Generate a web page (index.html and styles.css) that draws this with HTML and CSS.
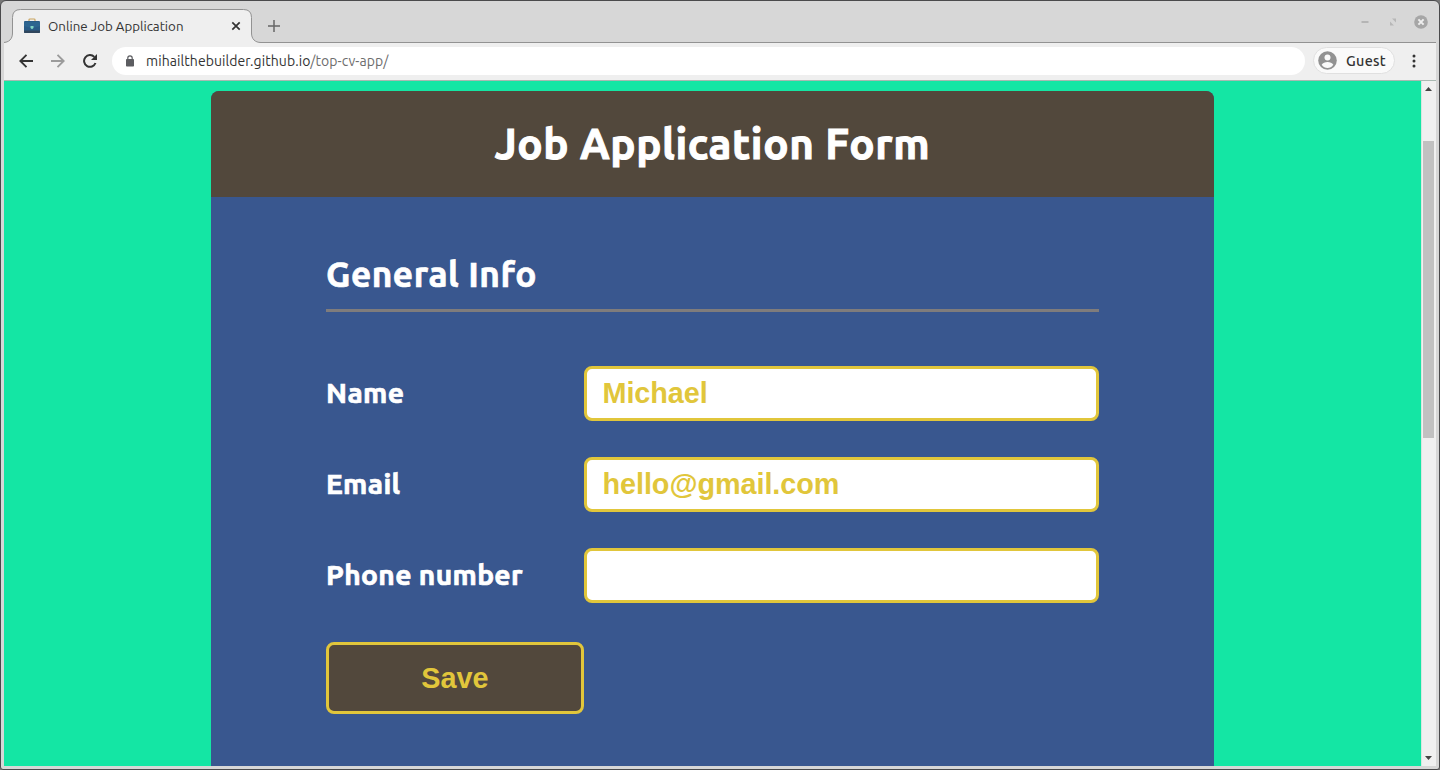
FILE: index.html
```html
<!DOCTYPE html>
<html lang="en">
<head>
<meta charset="utf-8">
<title>Online Job Application</title>
<link rel="stylesheet" href="styles.css">
</head>
<body>
<div class="window">
  <div class="tabstrip">
    <svg class="tab-shape" width="260" height="43" viewBox="0 0 260 43">
      <path d="M-1 42.5C5 42.5 8.500 39 8.500 33V17.500Q8.500 9.500 16.500 9.500H239.500Q247.500 9.500 247.500 17.500V33C247.500 39 251 42.500 257 42.500H260V44H-1Z" fill="#efefef"/>
      <path d="M-1 42.500C5 42.500 8.500 39 8.500 33V17.500Q8.500 9.500 16.500 9.500H239.500Q247.500 9.500 247.500 17.500V33C247.500 39 251 42.500 257 42.500H260" fill="none" stroke="#929292"/>
    </svg>
    <div class="tab">
      <svg class="favicon" width="16" height="16" viewBox="0 0 16 16">
        <path d="M5 3.500V1.800Q5 1 6 1H10Q11 1 11 1.800V3.500" fill="none" stroke="#c9a45e" stroke-width="1.200"/>
        <rect x="0" y="3" width="16" height="12" rx="1" fill="#285b86"/>
        <path d="M0 12.500H16V14Q16 15 15 15H1Q0 15 0 14Z" fill="#30465d"/>
        <path d="M0 4H16V8Q12 9.500 8 9.500T0 8Z" fill="#2c6590"/>
        <path d="M6.500 8H9.500V10L8 11.300L6.500 10Z" fill="#7fd4c4"/>
      </svg>
      <span class="tab-title">Online Job Application</span>
      <svg class="tab-close" width="10" height="10" viewBox="0 0 10 10"><path d="M1.300 1.300L8.700 8.700M8.700 1.300L1.300 8.700" stroke="#333" stroke-width="1.700"/></svg>
    </div>
    <svg class="new-tab" width="12" height="12" viewBox="0 0 12 12"><path d="M6 0V12M0 6H12" stroke="#666" stroke-width="1.500"/></svg>
    <div class="window-buttons">
      <svg width="8" height="14" viewBox="0 0 8 14"><path d="M0.500 7H7.500" stroke="#aaa" stroke-width="1.600"/></svg>
      <svg width="8" height="14" viewBox="0 0 8 14"><path d="M3 3.500H7V7.500ZM1 6.500V10.500H5Z" fill="#b7b7b7"/></svg>
      <svg width="14" height="14" viewBox="0 0 14 14"><circle cx="7" cy="7" r="6.800" fill="#a6a6a6"/><path d="M4.400 4.400L9.600 9.600M9.600 4.400L4.400 9.600" stroke="#eee" stroke-width="2"/></svg>
    </div>
  </div>

  <div class="toolbar">
    <div class="nav">
      <svg width="14" height="14" viewBox="0 0 14 14"><path d="M14 7H1.500M7.500 0.800L1.300 7L7.500 13.200" fill="none" stroke="#333" stroke-width="1.900"/></svg>
      <svg width="14" height="14" viewBox="0 0 14 14"><path d="M0 7H12.500M6.500 0.800L12.700 7L6.500 13.200" fill="none" stroke="#9b9b9b" stroke-width="1.900"/></svg>
      <svg width="14" height="14" viewBox="0 0 14 14"><path d="M12.500 9A5.900 5.900 0 1 1 11.300 2.900" fill="none" stroke="#333" stroke-width="2"/><path d="M14 0V6H8Z" fill="#333"/></svg>
    </div>
    <div class="address">
      <svg width="8" height="12" viewBox="0 0 8 12"><path d="M1.800 5V3A2.200 2.200 0 0 1 6.200 3V5" fill="none" stroke="#5c5d61" stroke-width="1.200"/><rect y="4" width="8" height="7.500" rx="0.800" fill="#5c5d61"/></svg>
      <span class="url"><span class="host">mihailthebuilder.github.io</span>/top-cv-app/</span>
    </div>
    <div class="profile">
      <svg width="19" height="19" viewBox="0 0 19 19"><circle cx="9.500" cy="9.500" r="9.300" fill="#929292"/><circle cx="9.500" cy="6.500" r="3" fill="#fafafa"/><path d="M3.700 13.800Q5.500 11 9.500 11T15.300 13.800Q13 17 9.500 17T3.700 13.800Z" fill="#fafafa"/></svg>
      <span class="guest">Guest</span>
    </div>
    <svg class="kebab" width="4" height="14" viewBox="0 0 4 14" fill="#333"><circle cx="2" cy="2" r="1.500"/><circle cx="2" cy="7" r="1.500"/><circle cx="2" cy="12" r="1.500"/></svg>
  </div>

  <div class="viewport">
    <main class="page">
      <div class="card">
        <header class="card-header"><h1 class="title">Job Application Form</h1></header>
        <form class="form">
          <h2 class="section-title"><span class="section-text">General Info</span></h2>
          <div class="fields">
            <label class="label name" for="name">Name</label>
            <input class="input" id="name" type="text" value="Michael">
            <label class="label email" for="email">Email</label>
            <input class="input" id="email" type="text" value="hello@gmail.com">
            <label class="label phone" for="phone">Phone number</label>
            <input class="input" id="phone" type="text">
          </div>
          <button class="save" type="button">Save</button>
        </form>
      </div>
    </main>
    <div class="scrollbar">
      <svg class="arrow" width="7" height="4" viewBox="0 0 7 4"><path d="M0 4L3.500 0L7 4Z" fill="#444"/></svg>
      <div class="track"><div class="thumb"></div></div>
      <svg class="arrow" width="7" height="4" viewBox="0 0 7 4"><path d="M0 0L3.500 4L7 0Z" fill="#444"/></svg>
    </div>
  </div>
</div>
</body>
</html>
```
FILE: styles.css
```css
* { box-sizing: border-box; }
html { background: #777; }
body { margin: 0; overflow: hidden; font-family: Ubuntu, "Noto Sans", sans-serif; }
svg { display: block; flex: none; }

.window {
  display: flex;
  flex-direction: column;
  width: 1440px;
  height: 770px;
  padding: 0 3px 3px;
  border: 1px solid #4a4a4c;
  border-radius: 6px 6px 3px 3px;
  background: #d7d7d7;
  overflow: hidden;
}

.tabstrip {
  position: relative;
  display: flex;
  align-items: center;
  height: 42px;
  flex: none;
  padding: 8px 8px 0 20px;
  border-bottom: 1px solid #929292;
}
.tab-shape { position: absolute; left: 0; top: -1px; }
.tab { position: relative; display: flex; align-items: center; width: 217px; height: 34px; }
.favicon { margin-right: 8px; }
.tab-title { padding-top: 2px; font-size: 13.3px; line-height: 18px; color: #333; white-space: nowrap; }
.tab-close { margin-left: auto; }
.new-tab { margin-left: 27px; }
.window-buttons { display: flex; align-items: center; gap: 20px; margin: -8px 0 0 auto; }
.window-buttons svg:last-child { margin-left: -3px; }

.toolbar { display: flex; align-items: center; height: 38px; flex: none; padding: 0 20px 2px 15px; background: #efefef; border-bottom: 1px solid #a9b9b2; }
.nav { display: flex; gap: 18px; width: 93px; }
.address { display: flex; align-items: center; gap: 12px; width: 1193px; height: 28px; padding-left: 14px; border-radius: 14px; background: #fff; }
.url { font-size: 14px; line-height: 20px; letter-spacing: 0.08px; color: #6d6d6d; white-space: nowrap; }
.host { color: #333; }
.profile { display: flex; align-items: center; gap: 9px; width: 82px; height: 27px; margin-left: 8px; padding-left: 4px; border: 1px solid #e0e0e0; border-radius: 14px; background: #fafafa; }
.guest { font-size: 14.4px; font-weight: 500; line-height: 20px; letter-spacing: 0.3px; color: #333; }
.kebab { margin-left: auto; }

.viewport { display: flex; flex: 1; min-height: 0; }
.page { flex: 1; padding-top: 10px; background: #14e6a4; overflow: hidden; }
.card { width: 1003px; height: 900px; margin-left: 207px; border-radius: 8px; background: #39578f; overflow: hidden; }
.card-header { display: flex; align-items: center; justify-content: center; height: 106px; background: #52483c; }
.title, .section-title, .label { color: #fff; font-weight: 700; -webkit-text-stroke: 0.7px #fff; }
.title { margin: 0; font-size: 42.2px; line-height: 58px; letter-spacing: 0.65px; white-space: nowrap; -webkit-text-stroke-width: 1px; }
.form { padding: 49px 115px 0; }
.section-title { height: 66px; margin: 0; border-bottom: 3px solid #7f7c7c; font-size: 35.200px; line-height: 57px; letter-spacing: 0.55px; }
.fields { display: grid; grid-template-columns: 258px 515px; row-gap: 36px; margin-top: 54px; align-items: center; }
.label { padding-bottom: 2px; font-size: 28.200px; line-height: 40px; letter-spacing: 0.35px; white-space: nowrap; }
.input { width: 100%; height: 55px; padding: 0 16px 0 15.500px; border: 3px solid #e1c63b; border-radius: 8px; background: #fff; color: #e1c63b; font: 700 28.8px "Liberation Sans", Arial, sans-serif; letter-spacing: -0.06px; outline: none; }
.save { display: block; width: 258px; height: 72px; margin-top: 39px; padding: 0; border: 3px solid #e1c63b; border-radius: 8px; background: #52483c; color: #e1c63b; font: 700 28.8px "Liberation Sans", Arial, sans-serif; }

.scrollbar { display: flex; flex-direction: column; align-items: center; width: 15px; padding: 6px 1px 6px 0; border-left: 1px solid #d5e7df; background: #f0f0f0; }
.track { flex: 1; padding-top: 50px; }
.thumb { width: 11px; height: 297px; background: #c1c1c1; }
```
